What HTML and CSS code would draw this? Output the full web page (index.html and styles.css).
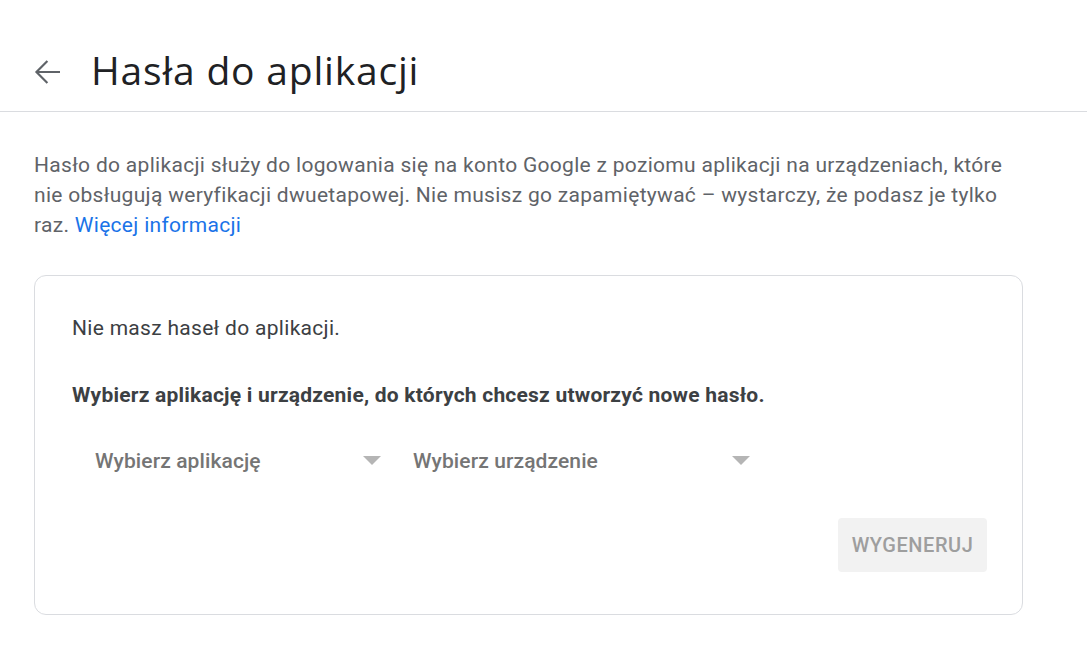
FILE: index.html
```html
<!DOCTYPE html>
<html lang="pl">
<head>
<meta charset="utf-8">
<title>Hasła do aplikacji</title>
<link rel="stylesheet" href="styles.css">
</head>
<body>
<header class="topbar">
  <a class="back" href="#" aria-label="Wstecz">
    <svg width="36" height="36" viewBox="0 0 24 24"><path d="M20 12H4.6M11.6 4.7L4.3 12l7.3 7.3" fill="none" stroke="#5f6368" stroke-width="1.45"/></svg>
  </a>
  <h1 class="title">Hasła do aplikacji</h1>
</header>
<main class="content">
  <p class="intro">Hasło do aplikacji służy do logowania się na konto Google z poziomu aplikacji na urządzeniach, które nie obsługują weryfikacji dwuetapowej. Nie musisz go zapamiętywać – wystarczy, że podasz je tylko raz. <a href="#" class="link">Więcej informacji</a></p>
  <section class="card">
    <p class="empty">Nie masz haseł do aplikacji.</p>
    <p class="choose">Wybierz aplikację i urządzenie, do których chcesz utworzyć nowe hasło.</p>
    <div class="selects">
      <div class="select select-app"><span>Wybierz aplikację</span><i class="caret"></i></div>
      <div class="select select-dev"><span>Wybierz urządzenie</span><i class="caret"></i></div>
    </div>
    <div class="actions">
      <button class="gen" disabled>WYGENERUJ</button>
    </div>
  </section>
</main>
</body>
</html>
```
FILE: styles.css
```css
html, body {
  margin: 0;
  padding: 0;
  background: #fff;
}
body {
  font-family: Roboto, "Liberation Sans", Arial, sans-serif;
  color: #3c4043;
}
.topbar {
  display: flex;
  align-items: flex-start;
  height: 112px;
  border-bottom: 1px solid #dadce0;
  padding: 43px 0 0 30px;
  box-sizing: border-box;
}
.back {
  display: flex;
  width: 36px;
  height: 36px;
  margin-top: 11px;
}
.title {
  margin: 0 0 0 25px;
  font-family: "Open Sans", Roboto, sans-serif;
  font-weight: 400;
  font-size: 39px;
  line-height: normal;
  color: #202124;
  letter-spacing: 0.8px;
}
.content {
  padding: 38px 0 0 34px;
}
.intro {
  margin: 0;
  font-size: 21px;
  line-height: 30px;
  letter-spacing: 0.3px;
  color: #5f6368;
  max-width: 995px;
}
.link {
  color: #1a73e8;
  text-decoration: none;
}
.card {
  margin-top: 35px;
  width: 989px;
  height: 340px;
  box-sizing: border-box;
  border: 1px solid #dadce0;
  border-radius: 12px;
  padding: 39px 35px 0 37px;
}
.empty {
  margin: 0;
  font-size: 21px;
  line-height: 26px;
  letter-spacing: 0.3px;
  color: #3c4043;
}
.choose {
  margin: 41px 0 0;
  font-size: 21px;
  line-height: 26px;
  letter-spacing: 0.22px;
  font-weight: 700;
  color: #3c4043;
}
.selects {
  display: flex;
  margin-top: 40px;
  padding-left: 23px;
  gap: 32px;
}
.select {
  display: flex;
  align-items: center;
  justify-content: space-between;
  height: 26px;
  font-size: 21px;
  font-weight: 500;
  letter-spacing: 0.1px;
  color: #757575;
}
.select-app { width: 286px; }
.select-dev { width: 337px; }
.caret {
  width: 0;
  height: 0;
  margin-top: -2px;
  border-left: 9px solid transparent;
  border-right: 9px solid transparent;
  border-top: 9px solid #b5b5b5;
}
.actions {
  display: flex;
  justify-content: flex-end;
  margin-top: 44px;
}
.gen {
  width: 149px;
  height: 54px;
  border: none;
  border-radius: 4px;
  background: #f2f2f2;
  color: #9e9e9e;
  font-family: Roboto, sans-serif;
  font-weight: 500;
  font-size: 20px;
  letter-spacing: 0.55px;
  padding: 0;
}
```
